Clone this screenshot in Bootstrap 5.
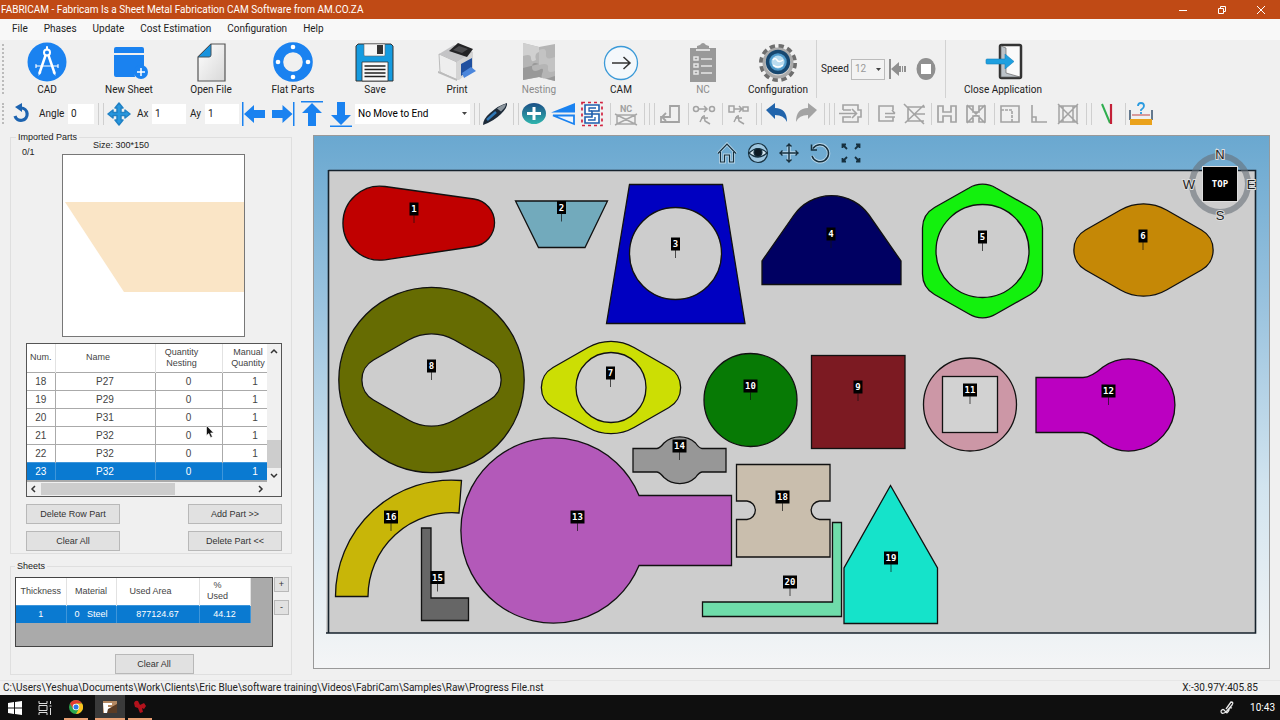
<!DOCTYPE html>
<html lang="en">
<head>
<meta charset="utf-8">
<meta name="viewport" content="width=device-width, initial-scale=1">
<title>FABRICAM</title>
<link href="https://cdn.jsdelivr.net/npm/bootstrap@5.3.0/dist/css/bootstrap.min.css" rel="stylesheet">
<script src="https://cdn.jsdelivr.net/npm/bootstrap@5.3.0/dist/js/bootstrap.bundle.min.js"></script>
<style>
  :root { --ui: Roboto, "Open Sans", sans-serif; --form: "Liberation Sans", Arial, sans-serif; --blue: #1a82f0; --sel: #0a7ad1; }
  body { background: #f0f0f0; color: #222; font-family: var(--ui); font-size: 10px; line-height: 14px; }
  svg { display: block; flex: none; }
  button { color: inherit; }
  .titlebar { background: #c04a15; color: #fff; height: 19px; padding-left: 1px; }
  .titlebar button, .plain { background: none; border: 0; padding: 0; }
  .titlebar button { width: 39px; height: 19px; }
  .menubar { height: 21px; padding: 0 0 1px 12px; background: #f8f8f8; }
  .menubar a { color: #222; text-decoration: none; margin-right: 16px; }
  .tools { height: 58px; }
  .grip { width: 2px; margin: 4px 2px; border-left: 2px dotted #bbb; }
  .tool { width: 82px; padding: 2px 0 0; border: 0; background: none; display: flex; flex-direction: column; align-items: center; gap: 1px; white-space: nowrap; }
  .tool.slim { width: 68px; }
  .tool:disabled { color: #8b8b8b; }
  .vline { width: 1px; background: #d2d2d2; }
  .speed-lab { width: 30px; }
  .speed { width: 34px; height: 21px; border: 1px solid #bbb; background-color: #f3f3f3; color: #999; padding: 0 3px; }
  .strip { height: 30px; padding-top: 1px; }
  .ib { width: 29px; height: 28px; display: flex; align-items: center; justify-content: center; border: 0; padding: 0; background: none; flex: none; }
  .sp { width: 5px; height: 22px; border-right: 1px solid #cfcfcf; margin: 0; flex: none; }
  .strip input { border: 0; height: 20px; padding: 0 3px; background: #fff; color: #222; }
  .strip label { padding-left: 4px; }
  .in-s { width: 26px; } .in-m { width: 34px; } .lab-s { width: 19px; } .lab-m { width: 33px; }
  .pick { width: 115px; height: 20px; border: 0; padding: 0 3px; background-color: #fff; }
  .arrowed { appearance: none; background-repeat: no-repeat; background-position: right 3px center; background-size: 5px 3px; background-image: url("data:image/svg+xml,%3Csvg xmlns='http://www.w3.org/2000/svg' viewBox='0 0 5 3'%3E%3Cpath d='M0 0h5L2.5 3z' fill='%23444'/%3E%3C/svg%3E"); }
  .side { width: 313px; flex: none; font-family: var(--form); font-size: 9px; line-height: 12px; padding: 3px 21px 0 10px; }
  .group { border: 1px solid #dfdfdf; }
  .group legend { float: none; width: auto; font-size: 9px; line-height: 12px; margin: 0 0 0 5px; padding: 0 2px; }
  .parts { padding: 0 9px 2px 15px; }
  .parts legend { margin-left: -10px; }
  .count { width: 36px; padding-top: 3px; margin-left: -4px; }
  .preview { margin-top: -4px; }
  .size { padding: 0 0 3px 31px; }
  .gridbox { border: 1px solid #555; position: relative; background: #fff; margin-top: 6px; }
  .clip { width: 241px; overflow: hidden; border-bottom: 2px solid #aaa; }
  .dg { border-collapse: collapse; table-layout: fixed; text-align: center; color: #444; margin: 0; }
  .dg th { font-weight: 400; line-height: 11px; padding: 0; background: #fff; border-right: 1px solid #e2e2e2; vertical-align: middle; }
  .dg td { padding: 0; height: 18px; line-height: 17px; font-size: 10px; border-top: 1px solid #aaa; border-right: 1px solid #aaa; background: #fff; }
  .dg .lefty { padding-right: 14px; }
  .dg .picked td { background: var(--sel); color: #fff; border-color: #3f96da; }
  .parts-t { width: 261px; } .parts-t thead tr { height: 28px; }
  .sheets-t { width: 234px; } .sheets-t thead tr { height: 27px; } .sheets-t td { font-size: 9px; }
  .bar { background: #f0f0f0; }
  .thumb { background: #cdcdcd; }
  .fb { height: 20px; border: 1px solid #b8b8b8; background: #e1e1e1; padding: 0; color: #333; line-height: 17px; border-radius: 0; }
  .w93 { width: 94px; } .w78 { width: 79px; }
  .pair { margin-top: 7px; }
  .mini { width: 15px; height: 15px; line-height: 11px; }
  .sheetbox { width: 258px; height: 70px; background: #aaa; border: 1px solid #444; }
  .sheets { padding: 0 2px 0 4px; margin-top: 6px; }
  .sheetrow { padding-top: 5px; }
  .canvas { margin: 7px 10px 11px 0; border: 1px solid #999; background: linear-gradient(#6aa8d0, #9cc4df 33%, #d2e4ef 66%, #f4f5f6); position: relative; min-width: 0; }
  .canvas > svg { width: 100%; height: auto; }
  .views { top: 3px; left: 0; right: 5px; position: absolute; }
  .views button { width: 31px; height: 28px; display: flex; justify-content: center; align-items: center; }
  .canvas > .compass { position: absolute; right: 10px; top: 8px; width: 78px; }
  .pt { stroke: #111; stroke-width: 1.3; }
  .lbl text { font: bold 9px "DejaVu Sans Mono", monospace; fill: #fff; text-anchor: middle; }
  .status { height: 15px; padding: 0 22px 0 3px; border-top: 1px solid #e6e6e6; }
  .taskbar { height: 25px; background: #0f0f0f; color: #fff; padding-right: 5px; }
  .tb { width: 30px; height: 25px; display: flex; align-items: center; justify-content: center; background: none; border: 0; padding: 0; }
  .tb.run { border-bottom: 2px solid #e9a074; width: 24px; margin: 0 3px; }
  .tb.on { background: #3a3a3a; width: 30px; margin: 0; }
</style>
</head>
<body class="d-flex flex-column min-vh-100 m-0">

<header class="titlebar d-flex align-items-center">
  <span class="me-auto text-nowrap">FABRICAM - Fabricam Is a Sheet Metal Fabrication CAM Software from AM.CO.ZA</span>
  <button aria-label="Minimize"><svg class="mx-auto" width="10" height="10" viewBox="0 0 10 10"><path d="M1 5.500h8" stroke="#fff"/></svg></button>
  <button aria-label="Restore"><svg class="mx-auto" width="10" height="10" viewBox="0 0 10 10" fill="none" stroke="#fff"><path d="M1.500 3.500h5v5h-5zM3.500 3V1.500h5v5H7"/></svg></button>
  <button aria-label="Close"><svg class="mx-auto" width="10" height="10" viewBox="0 0 10 10"><path d="M1 1l8 8M9 1l-8 8" stroke="#fff"/></svg></button>
</header>

<nav class="menubar d-flex align-items-center text-nowrap">
  <a href="#">File</a><a href="#">Phases</a><a href="#">Update</a><a href="#">Cost Estimation</a><a href="#">Configuration</a><a href="#">Help</a>
</nav>

<div class="tools d-flex" role="toolbar" aria-label="Main tools">
  <div class="grip"></div>
  <button class="tool"><svg width="40" height="40" viewBox="0 0 40 40"><circle cx="20" cy="20" r="19.500" fill="#1a82f0"/><g fill="none" stroke="#fff" stroke-linecap="round"><circle cx="20" cy="10.500" r="3" stroke-width="2"/><path d="M20 5v2.500" stroke-width="2"/><path d="M18.500 13.500L12.500 31M21.500 13.500L27.500 31" stroke-width="2.500"/><path d="M9 24h22M9 22.500v3M31 22.500v3" stroke-width="1.200"/></g><path d="M11.500 34l.5-5 2.500 1zM28.500 34l-.5-5-2.500 1z" fill="#fff"/></svg>CAD</button>
  <button class="tool"><svg width="40" height="40" viewBox="0 0 40 40"><path d="M5 7q0-2 2-2h26q2 0 2 2v4H5zM5 13h30v11a9 9 0 0 0-9 11H7q-2 0-2-2z" fill="#1a82f0"/><circle cx="32" cy="30" r="7" fill="#1a82f0"/><path d="M32 26v8M28 30h8" stroke="#fff" stroke-width="1.500"/></svg>New Sheet</button>
  <button class="tool"><svg width="40" height="40" viewBox="0 0 40 40"><defs><linearGradient id="pg" x1="0" y1="0" x2="1" y2="1"><stop offset="0" stop-color="#fff"/><stop offset="1" stop-color="#d8d8d8"/></linearGradient></defs><path d="M20 2h14v37H7V15z" fill="url(#pg)" stroke="#555" stroke-width="1.200"/><path d="M20 2L7 15h11q2 0 2-2z" fill="#1793de" stroke="#45525c"/></svg>Open File</button>
  <button class="tool"><svg width="40" height="40" viewBox="0 0 40 40"><circle cx="20" cy="20" r="14.800" fill="none" stroke="#1a82f0" stroke-width="10"/><g fill="#fff"><circle cx="20" cy="5" r="2.300"/><circle cx="20" cy="35" r="2.300"/><circle cx="5" cy="20" r="2.300"/><circle cx="35" cy="20" r="2.300"/></g></svg>Flat Parts</button>
  <button class="tool"><svg width="40" height="40" viewBox="0 0 40 40"><path d="M3 2h33l2 2v35H1V4z" fill="#159be0" stroke="#333"/><path d="M9 2h21v11q0 1-1 1H10q-1 0-1-1z" fill="#f7f7f7" stroke="#666" stroke-width=".6"/><path d="M22 3h6v9h-6z" fill="#333"/><path d="M7 20h26v19H7z" fill="#fafafa" stroke="#333" stroke-width=".8"/><path d="M9.500 24h21M9.500 27.500h21M9.500 31h21M9.500 34.500h21" stroke="#222" stroke-width="1.500"/></svg>Save</button>
  <button class="tool"><svg width="40" height="40" viewBox="0 0 40 40"><path d="M2 12L20 20v18L3 30z" fill="#eee" stroke="#999" stroke-width=".6"/><path d="M1 29l19 8v2L1 31z" fill="#bbb"/><path d="M20 20l16-10v17L22 38h-2z" fill="#d4d4d4"/><path d="M2 12L17 3l19 7-16 10z" fill="#c4c4c6"/><path d="M12 9l9-8 15 6-6 8z" fill="#232325"/><path d="M16 8l6-4 9 3-6 4z" fill="#4b4b4e"/><path d="M24 22l11-6v10l-11 8z" fill="#1f4f9f"/><path d="M25 31l9-6 5 4-12 7z" fill="#4b86dc"/></svg>Print</button>
  <button class="tool" disabled><svg width="40" height="40" viewBox="0 0 40 40"><path d="M4 1l16 4 16-3v37l-16-4-16 3z" fill="#b5b5b5"/><path d="M4 14q8-3 8 2t5 2q-2-7 3-8V5L4 1z" fill="#d0d0d0"/><path d="M20 22q-7-3-7 3t7 3q6-4 3 4t13 2v5l-16-4-16 3V26z" fill="#999"/><path d="M20 8q8-3 7 4t9 3v14q-8 3-7-3t-9-3z" fill="#c3c3c3"/></svg>Nesting</button>
  <button class="tool"><svg width="40" height="40" viewBox="0 0 40 40" fill="none"><circle cx="20" cy="21" r="16.500" fill="#f4f8fb" stroke="#3b9ad8" stroke-width="1.300"/><path d="M11 21h18M22.500 15L29 21l-6.500 6" stroke="#333" stroke-width="1.500"/></svg>CAM</button>
  <button class="tool" disabled><svg width="40" height="40" viewBox="0 0 40 40"><path d="M7 6h7V4l3-1q3-4 6 0l3 1v2h7v34H7z" fill="#999"/><path d="M13 8h14" stroke="#ddd" stroke-width="2"/><g fill="none" stroke="#e6e6e6" stroke-width="1.500"><path d="M11 15h4v3h-4zM11 22h4v3h-4zM11 29h4v3h-4zM18 17h11M18 24h11M18 31h11"/></g></svg>NC</button>
  <button class="tool slim"><svg width="40" height="40" viewBox="0 0 40 40"><circle cx="20" cy="21" r="16" fill="none" stroke="#6e6e6e" stroke-width="6" stroke-dasharray="5 3.380"/><circle cx="20" cy="21" r="14" fill="#d5d5d5" stroke="#aaa" stroke-width="3"/><circle cx="20" cy="20" r="10.500" fill="#4f9bcc" stroke="#17476f" stroke-width="3.500"/><circle cx="20" cy="20" r="6.500" fill="#b9dcf0"/><path d="M15 18q2-3 4 0t6 0M15 23q5 4 10 0" fill="none" stroke="#fff" stroke-width="1.500"/></svg>Configuration</button>
  <div class="vline ms-1 me-1"></div>
  <div class="d-flex align-items-center">
    <label for="speed" class="speed-lab">Speed</label>
    <select id="speed" class="speed arrowed rounded-0" disabled><option>12</option></select>
    <button class="plain ms-1" disabled aria-label="Step back"><svg width="18" height="22" viewBox="0 0 18 22" fill="#8f8f8f"><path d="M0 1h2v20H0zM2 11l8-7v4h2v6h-2v4zM13 8h1v6h-1zM15 8h2v6h-2z"/></svg></button>
    <button class="plain ms-2" disabled aria-label="Stop"><svg width="22" height="22" viewBox="0 0 22 22"><ellipse cx="11" cy="11" rx="9.500" ry="11" fill="#909090"/><rect x="6" y="6" width="10" height="10" fill="#fff"/></svg></button>
  </div>
  <div class="vline ms-2 me-3"></div>
  <button class="tool"><svg width="40" height="40" viewBox="0 0 40 40"><rect x="17" y="3" width="21" height="33" rx="1.500" fill="#fafafa" stroke="#333" stroke-width="2.500"/><path d="M18 4l5 2v25l14 4H18z" fill="#bcc3c9" stroke="#666" stroke-width=".7"/><path d="M3 18q0-1 1-1h18v-5l9 7.500-9 7.500v-5H4q-1 0-1-1z" fill="#1ea0e0" stroke="#1680bb" stroke-width=".6"/></svg>Close Application</button>
</div>

<div class="strip d-flex align-items-center" role="toolbar" aria-label="Edit tools">
  <div class="grip align-self-stretch"></div>
  <button class="ib" aria-label="Rotate"><svg width="24" height="24" viewBox="0 0 24 24"><path d="M6 14a6.200 6.200 0 1 0 6-8" fill="none" stroke="#1c63b0" stroke-width="3.200"/><path d="M13 1v9L6 5z" fill="#1c63b0"/></svg></button>
  <label for="angle" class="lab-m">Angle</label><input id="angle" class="in-s" value="0">
  <i class="sp"></i><i class="sp"></i>
  <button class="ib" aria-label="Move"><svg width="24" height="24" viewBox="0 0 24 24"><path d="M12 1l4 5h-2v4.500H18V8l5 4-5 4v-2.500h-4V18h2l-4 5-4-5h2v-4.500H6V16l-5-4 5-4v2.500h4V6H8z" fill="#2797de" stroke="#2081c4" stroke-width="1.500" stroke-linejoin="round"/></svg></button>
  <label for="ax" class="lab-s">Ax</label><input id="ax" class="in-m" value="1">
  <label for="ay" class="lab-s">Ay</label><input id="ay" class="in-m" value="1">
  <button class="ib" aria-label="Align left"><svg width="24" height="26" viewBox="0 0 24 26" fill="#1a82f0"><path d="M0 1h1.500v24H0zM2 13L12 4v5h11v8H12v5z"/></svg></button>
  <button class="ib" aria-label="Align right"><svg width="24" height="26" viewBox="0 0 24 26" fill="#1a82f0"><path d="M22 1h1.500v24H22zM21.500 13l-10-9v5H1v8h10.500v5z"/></svg></button>
  <button class="ib" aria-label="Align top"><svg width="24" height="26" viewBox="0 0 24 26" fill="#1a82f0"><path d="M1 0h22v1.500H1zM12 2l10 10h-6v13H8V12H2z"/></svg></button>
  <button class="ib" aria-label="Align bottom"><svg width="24" height="26" viewBox="0 0 24 26" fill="#1a82f0"><path d="M1 24.500h22V26H1zM12 24l10-10h-6V1H8v13H2z"/></svg></button>
  <select class="pick arrowed" aria-label="Move mode"><option>No Move to End</option></select>
  <i class="sp"></i><i class="sp"></i>
  <button class="ib" aria-label="Pen"><svg width="26" height="24" viewBox="0 0 26 24"><path d="M1 23q0-6 7-12Q17 3 25 1q1 4-6 11T1 23z" fill="#1d2a38"/><path d="M15 6.500q5-4 9-4.500 0 3-5 7.500z" fill="#8b959d"/><path d="M5 18l9-8" stroke="#2f77b5" stroke-width="2.500"/></svg></button>
  <i class="sp"></i><i class="sp"></i>
  <button class="ib" aria-label="Add"><svg width="24" height="24" viewBox="0 0 24 24"><defs><linearGradient id="ad" x1="0" y1="0" x2="0" y2="1"><stop offset="0" stop-color="#1c4f86"/><stop offset="1" stop-color="#2fb5ae"/></linearGradient></defs><ellipse cx="12" cy="11.500" rx="12" ry="10.500" fill="url(#ad)"/><path d="M12 5v13M5 11.500h14" stroke="#fff" stroke-width="3"/></svg></button>
  <button class="ib" aria-label="Flip"><svg width="26" height="24" viewBox="0 0 26 24"><path d="M1 10.500L25 1v9.500z" fill="#1a82f0"/><path d="M3 13.500h21V22z" fill="#eef5fc" stroke="#1a82f0" stroke-width="1.800"/></svg></button>
  <button class="ib" aria-label="Nest"><svg width="24" height="26" viewBox="0 0 24 26" fill="none"><rect x="2" y="1.500" width="20" height="23" stroke="#d22340" stroke-width="1.700" stroke-dasharray="3 3"/><path d="M5 4h14v6h-7v3h7v9H5v-6h7v-3H5z" fill="#fff" stroke="#1f5fae" stroke-width="1.600"/><path d="M16 7H9v3h3M8 19h7v-3" stroke="#1f5fae" stroke-width="1.300"/></svg></button>
  <i class="sp"></i>
  <button class="ib" disabled aria-label="NC"><svg width="26" height="26" viewBox="0 0 26 26" fill="none" stroke="#a8a8a8" stroke-width="1.500"><text x="13" y="11" text-anchor="middle" font-size="9" font-weight="bold" fill="#a0a0a0" stroke="none">NC</text><path d="M4 14h18v9H4zM2 13l22 11M24 13L2 24"/></svg></button>
  <i class="sp"></i><i class="sp"></i><i class="sp"></i>
  <button class="ib" disabled aria-label="Lead in"><svg width="24" height="24" viewBox="0 0 24 24" fill="none" stroke="#a3a3a3" stroke-width="1.800"><path d="M3 14v6h18V4h-9v11H4M8 11l-4 4 4 4"/></svg></button>
  <i class="sp"></i>
  <button class="ib" disabled aria-label="Link round"><svg width="24" height="24" viewBox="0 0 24 24" fill="none" stroke="#a3a3a3" stroke-width="1.500"><circle cx="4" cy="7" r="2.500"/><circle cx="20" cy="7" r="2.500"/><path d="M7 7h8M12 4l3 3-3 3M12 13l1 6 5 3M11 14l-3 6M9 16h7"/></svg></button>
  <i class="sp"></i>
  <button class="ib" disabled aria-label="Link square"><svg width="24" height="24" viewBox="0 0 24 24" fill="none" stroke="#a3a3a3" stroke-width="1.500"><path d="M3 4h5v6H3zM17 5h5v4h-5zM8 7h8M13 4l3 3-3 3M12 13l1 6 5 3M11 14l-3 6M9 16h7"/></svg></button>
  <i class="sp"></i><i class="sp"></i>
  <button class="ib" aria-label="Undo"><svg width="24" height="24" viewBox="0 0 24 24"><path d="M1 8l9-7v5q12 0 12 14-3-7-12-7v4z" fill="#2164ab"/></svg></button>
  <button class="ib" disabled aria-label="Redo"><svg width="24" height="24" viewBox="0 0 24 24"><path d="M23 8l-9-7v5Q2 6 2 20q3-7 12-7v4z" fill="#a3a3a3"/></svg></button>
  <i class="sp"></i><i class="sp"></i><i class="sp"></i>
  <button class="ib" disabled aria-label="Insert"><svg width="24" height="24" viewBox="0 0 24 24" fill="none" stroke="#a3a3a3" stroke-width="1.600"><path d="M5 8V3h15v5h3v7h-3v5H5v-5h8M5 8h8M1 11.500h17M14 7l4.500 4.500L14 16"/></svg></button>
  <i class="sp"></i>
  <button class="ib" disabled aria-label="Open contour"><svg width="24" height="24" viewBox="0 0 24 24" fill="none" stroke="#a3a3a3" stroke-width="1.600"><path d="M21 8V4H7v15h14v-4M13 11.500h10M13 15h10M20 8l3 3.500"/></svg></button>
  <button class="ib" disabled aria-label="Remove contour"><svg width="24" height="24" viewBox="0 0 24 24" fill="none" stroke="#a3a3a3" stroke-width="1.600"><path d="M24 5H7v14h16M14 12h10M3 2l20 20M23 3L4 21"/></svg></button>
  <i class="sp"></i>
  <button class="ib" disabled aria-label="Bridge"><svg width="24" height="24" viewBox="0 0 24 24" fill="none" stroke="#a3a3a3" stroke-width="1.700"><path d="M3 4h5v6h8V4h5v16h-5v-6H8v6H3z"/></svg></button>
  <button class="ib" disabled aria-label="Remove bridge"><svg width="24" height="24" viewBox="0 0 24 24" fill="none" stroke="#a3a3a3" stroke-width="1.700"><path d="M3 4h6v6h6V4h6v16h-6v-6H9v6H3zM3 3l18 18M21 3L3 21"/></svg></button>
  <i class="sp"></i>
  <button class="ib" disabled aria-label="Corner"><svg width="24" height="24" viewBox="0 0 24 24" fill="none" stroke="#a3a3a3" stroke-width="1.600"><path d="M3 4h18v16H3z"/><path d="M3 8h11v12" stroke-dasharray="3 1"/></svg></button>
  <button class="ib" disabled aria-label="Right angle"><svg width="24" height="24" viewBox="0 0 24 24" fill="none" stroke="#a3a3a3" stroke-width="1.600"><path d="M5 3v17h15M5 15h4v5"/></svg></button>
  <button class="ib" disabled aria-label="Delete frame"><svg width="24" height="24" viewBox="0 0 24 24" fill="none" stroke="#a3a3a3" stroke-width="1.500"><path d="M3 4h18v16H3zM7 4v16M17 4v16M2 2l20 20M22 2L2 22"/></svg></button>
  <i class="sp"></i><i class="sp"></i>
  <button class="ib" aria-label="Compare"><svg width="24" height="24" viewBox="0 0 24 24" fill="none"><path d="M7 2l8 19" stroke="#2fae4f" stroke-width="2"/><path d="M16 2v20" stroke="#c32038" stroke-width="2.200"/></svg></button>
  <i class="sp"></i>
  <button class="ib" aria-label="Measure"><svg width="24" height="26" viewBox="0 0 24 26" fill="none"><path d="M1 9v10M23 9v10" stroke="#34506e" stroke-width="1.500"/><path d="M3 14h18" stroke="#c14444"/><path d="M9 5q0-3 3-3t3 3q0 2-3 4v1M12 11v2" stroke="#2a9be0" stroke-width="1.800"/><path d="M1 18h22v6H1z" fill="#eaa21c"/></svg></button>
</div>

<main class="d-flex flex-grow-1">
  <aside class="side">
    <fieldset class="group parts">
      <legend>Imported Parts</legend>
      <div class="d-flex">
        <div class="count">0/1</div>
        <div class="preview ms-1">
          <div class="size">Size: 300*150</div>
          <svg width="183" height="183" viewBox="0 0 183 183"><rect x=".5" y=".5" width="182" height="182" fill="#fff" stroke="#777"/><path d="M3 48h179v90H62z" fill="#fae5c6"/></svg>
        </div>
      </div>
      <div class="gridbox">
        <div class="d-flex">
          <div class="clip">
            <table class="dg parts-t">
              <colgroup><col width="28"><col width="100"><col width="67"><col width="66"></colgroup>
              <thead><tr><th>Num.</th><th class="lefty">Name</th><th class="lefty">Quantity<br>Nesting</th><th class="lefty">Manual<br>Quantity</th></tr></thead>
              <tbody>
                <tr><td>18</td><td>P27</td><td>0</td><td>1</td></tr>
                <tr><td>19</td><td>P29</td><td>0</td><td>1</td></tr>
                <tr><td>20</td><td>P31</td><td>0</td><td>1</td></tr>
                <tr><td>21</td><td>P32</td><td>0</td><td>1</td></tr>
                <tr><td>22</td><td>P32</td><td>0</td><td>1</td></tr>
                <tr class="picked"><td>23</td><td>P32</td><td>0</td><td>1</td></tr>
              </tbody>
            </table>
          </div>
          <div class="bar flex-grow-1 d-flex flex-column align-items-center justify-content-between">
            <svg width="14" height="14" viewBox="0 0 14 14"><path d="M4 9l3-3 3 3" fill="none" stroke="#333" stroke-width="1.500"/></svg>
            <div class="thumb w-100 mt-auto" style="height:28px"></div>
            <svg width="14" height="14" viewBox="0 0 14 14"><path d="M4 6l3 3 3-3" fill="none" stroke="#333" stroke-width="1.500"/></svg>
          </div>
        </div>
        <div class="bar d-flex align-items-center">
          <svg width="14" height="14" viewBox="0 0 14 14"><path d="M8 4L5 7l3 3" fill="none" stroke="#333" stroke-width="1.500"/></svg>
          <div class="thumb" style="width:134px;height:12px"></div>
          <svg class="ms-auto me-3" width="10" height="14" viewBox="0 0 10 14"><path d="M4 4l3 3-3 3" fill="none" stroke="#333" stroke-width="1.500"/></svg>
        </div>
        <svg class="position-absolute" style="left:179px;top:81px" width="9" height="13" viewBox="0 0 9 13"><path d="M.5.5v10l2.300-2 1.800 4 1.800-.8-1.800-3.800h3z" fill="#111" stroke="#fff" stroke-width=".6"/></svg>
      </div>
      <div class="pair d-flex justify-content-between"><button class="fb w93">Delete Row Part</button><button class="fb w93">Add Part &gt;&gt;</button></div>
      <div class="pair d-flex justify-content-between"><button class="fb w93">Clear All</button><button class="fb w93">Delete Part &lt;&lt;</button></div>
    </fieldset>
    <fieldset class="group sheets">
      <legend class="ms-0">Sheets</legend>
      <div class="sheetrow d-flex justify-content-between">
        <div class="sheetbox">
          <table class="dg sheets-t">
            <colgroup><col width="50"><col width="50"><col width="83"><col width="51"></colgroup>
            <thead><tr><th>Thickness</th><th>Material</th><th class="lefty">Used Area</th><th class="lefty">%<br>Used</th></tr></thead>
            <tbody><tr class="picked"><td>1</td><td>0 &nbsp; Steel</td><td>877124.67</td><td>44.12</td></tr></tbody>
          </table>
        </div>
        <div class="d-flex flex-column gap-2"><button class="fb mini" aria-label="Add sheet">+</button><button class="fb mini" aria-label="Remove sheet">-</button></div>
      </div>
      <div class="pair d-flex justify-content-center ps-1"><button class="fb w78">Clear All</button></div>
    </fieldset>
  </aside>

  <section class="canvas flex-grow-1" aria-label="Nesting view">
    <svg viewBox="314 136 955 532">
      <defs>
        <path id="dia" d="M-23-40A46 46 0 0 1 23-40L58-20A23 23 0 0 1 58 20L23 40A46 46 0 0 1-23 40L-58 20A23 23 0 0 1-58-20Z"/>
        <g id="b1"><rect x="-4.500" y="-6.500" width="9" height="13" fill="#000"/><path d="M0 6v8" stroke="#111" stroke-opacity=".7"/></g>
        <g id="b2"><rect x="-7" y="-6.500" width="14" height="13" fill="#000"/><path d="M0 6v8" stroke="#111" stroke-opacity=".7"/></g>
      </defs>
      <path d="M328.500 170.500H1255.500V633H326" fill="#cdcdcd" stroke="#16222c" stroke-width="1.600"/><path d="M328.500 170v463" stroke="#16222c" stroke-width="1.600"/>
      <g class="pt">
        <path d="M385 186.500L474 199A24 24 0 0 1 474 246.500L385 259.800A37 37 0 1 1 385 186.500Z" fill="#c00000"/>
        <path d="M515.500 201H607.500L585 247.500H538.500Z" fill="#72aabc"/>
        <path d="M629.500 184.500H722.500L745 323.500H606.500Z" fill="#0000c1"/><circle cx="675.500" cy="253.500" r="46" fill="#cdcdcd"/>
        <path d="M762 284.500V261L794 215A46 46 0 0 1 869 215L901 261V284.500Z" fill="#000062"/>
        <path d="M922.500 228A24 24 0 0 1 934.500 207.500L969 188A26 26 0 0 1 996 188L1030.500 207.500A24 24 0 0 1 1042.500 228V274A24 24 0 0 1 1030.500 294.500L996 314A26 26 0 0 1 969 314L934.500 294.500A24 24 0 0 1 922.500 274Z" fill="#13f10d"/><circle cx="982.500" cy="251" r="46.500" fill="#cdcdcd"/>
        <use href="#dia" x="1143.500" y="250" fill="#c58806"/>
        <circle cx="431.500" cy="380" r="92.700" fill="#666c02"/><use href="#dia" x="431.500" y="380" fill="#cdcdcd"/>
        <use href="#dia" x="611" y="387.500" fill="#ccde04"/><circle cx="611" cy="387.500" r="35" fill="#cdcdcd"/>
        <circle cx="750.500" cy="400" r="46.500" fill="#077a05"/>
        <rect x="811.500" y="355.500" width="93.500" height="93" fill="#7c1a22"/>
        <circle cx="970" cy="404.500" r="46.500" fill="#cc97a6"/><rect x="942.500" y="376.500" width="55" height="56" fill="#d2d2d2"/>
        <path d="M1036 377.500H1083Q1091 377.500 1103 367A46 46 0 1 1 1103 443Q1091 432.500 1083 432.500H1036Z" fill="#bb00c1"/>
        <path d="M639 495.500H731.500V565.500H639A92.500 92.500 0 1 1 639 495.500Z" fill="#b359b9"/>
        <path d="M633 448.500H657Q660 448 664 443A23.500 23.500 0 0 1 695.500 443Q699 448 702 448.500H726V472H702Q699 472.500 695.500 477.500A23.500 23.500 0 0 1 664 477.500Q660 472.500 657 472H633Z" fill="#979797"/>
        <path d="M421.500 528H431V598H468.500V620.500H421.500Z" fill="#666"/>
        <path d="M335.500 596.500A116 116 0 0 1 461.500 480.500L459 513A84 84 0 0 0 368 596.500Z" fill="#c8b608"/>
        <path d="M736.500 464.500H830V501H819.500A9.300 9.300 0 0 0 819.500 519.500H830V557H736.500V519.500H747A9.300 9.300 0 0 0 747 501H736.500Z" fill="#c9bead"/>
        <path d="M702.500 602H832.500V522.500H841.500V616.500H702.500Z" fill="#6fdcaa"/>
        <path d="M890.500 485.500L937.500 568V623.500H844V568Z" fill="#15e3ca"/>
      </g>
      <g class="lbl">
        <g transform="translate(414 209)"><use href="#b1"/><text y="3">1</text></g>
        <g transform="translate(561.500 207.500)"><use href="#b1"/><text y="3">2</text></g>
        <g transform="translate(675.500 244)"><use href="#b1"/><text y="3">3</text></g>
        <g transform="translate(831 234)"><use href="#b1"/><text y="3">4</text></g>
        <g transform="translate(982.500 237)"><use href="#b1"/><text y="3">5</text></g>
        <g transform="translate(1143 236)"><use href="#b1"/><text y="3">6</text></g>
        <g transform="translate(610.500 373)"><use href="#b1"/><text y="3">7</text></g>
        <g transform="translate(431.500 366)"><use href="#b1"/><text y="3">8</text></g>
        <g transform="translate(858 387)"><use href="#b1"/><text y="3">9</text></g>
        <g transform="translate(750.500 386)"><use href="#b2"/><text y="3">10</text></g>
        <g transform="translate(970 390)"><use href="#b2"/><text y="3">11</text></g>
        <g transform="translate(1108.500 391)"><use href="#b2"/><text y="3">12</text></g>
        <g transform="translate(577.500 517)"><use href="#b2"/><text y="3">13</text></g>
        <g transform="translate(679.500 446)"><use href="#b2"/><text y="3">14</text></g>
        <g transform="translate(437.500 577.500)"><use href="#b2"/><text y="3">15</text></g>
        <g transform="translate(391 517)"><use href="#b2"/><text y="3">16</text></g>
        <g transform="translate(782.500 497)"><use href="#b2"/><text y="3">18</text></g>
        <g transform="translate(891 558)"><use href="#b2"/><text y="3">19</text></g>
        <g transform="translate(790 582)"><use href="#b2"/><text y="3">20</text></g>
      </g>
    </svg>
    <div class="views d-flex justify-content-center">
      <button class="plain" aria-label="Home"><svg width="22" height="22" viewBox="0 0 22 22" fill="none"><path d="M2 11.500L11 2l9 9.500M4.500 10V20H8.500V13H13.500V20H17.500V10" stroke="#fff" stroke-opacity=".5" stroke-width="3"/><path d="M2 11.500L11 2l9 9.500M4.500 10V20H8.500V13H13.500V20H17.500V10" stroke="#16303f" stroke-width="1.200"/></svg></button>
      <button class="plain" aria-label="Look"><svg width="22" height="22" viewBox="0 0 22 22" fill="none" stroke="#16303f" stroke-width="1.200"><circle cx="11" cy="11" r="9.500" fill="#9ec6df"/><path d="M2 11q9-9 18 0-9 8-18 0z" fill="#d5e6f0"/><circle cx="11" cy="10.500" r="4" fill="#0d1a24"/></svg></button>
      <button class="plain" aria-label="Pan"><svg width="22" height="22" viewBox="0 0 22 22" fill="none"><path d="M11 2v18M2 11h18" stroke="#fff" stroke-opacity=".5" stroke-width="3.500"/><path d="M11 2v18M2 11h18M8.500 4.500L11 2l2.500 2.500M8.500 17.500L11 20l2.500-2.500M4.500 8.500L2 11l2.500 2.500M17.500 8.500L20 11l-2.500 2.500" stroke="#16303f" stroke-width="1.400"/></svg></button>
      <button class="plain" aria-label="Orbit"><svg width="22" height="22" viewBox="0 0 22 22" fill="none"><path d="M4 6.500A8.500 8.500 0 1 1 3 14" stroke="#fff" stroke-opacity=".5" stroke-width="3.500"/><path d="M4 6.500A8.500 8.500 0 1 1 3 14M2.500 2.500V8H8" stroke="#16303f" stroke-width="1.500"/></svg></button>
      <button class="plain" aria-label="Fit"><svg width="22" height="22" viewBox="0 0 22 22" fill="none"><path id="fit" d="M6 2.500H2.500V6M3 3l4 4M16 2.500h3.500V6M19 3l-4 4M6 19.500H2.500V16M3 19l4-4M16 19.500h3.500V16M19 19l-4-4" stroke="#16303f" stroke-width="1.800"/></svg></button>
    </div>
    <svg class="compass" width="78" height="80" viewBox="0 0 78 80" font-family="Liberation Sans, Arial, sans-serif" font-size="13" text-anchor="middle" fill="#222">
      <circle cx="39" cy="40" r="28" fill="none" stroke="#687078" stroke-opacity=".6" stroke-width="6"/>
      <rect x="21.500" y="22.500" width="35" height="35" fill="#000" stroke="#ddd"/>
      <g stroke="#ddd" stroke-width="2" paint-order="stroke"><text x="39" y="15">N</text><text x="39" y="76">S</text><text x="8" y="45">W</text><text x="70" y="45">E</text></g>
      <text x="39" y="43" font-family="DejaVu Sans Mono, monospace" font-size="9" font-weight="bold" fill="#fff">TOP</text>
    </svg>
  </section>
</main>

<footer class="status d-flex align-items-center justify-content-between text-nowrap">
  <span>C:\Users\Yeshua\Documents\Work\Clients\Eric Blue\software training\Videos\FabriCam\Samples\Raw\Progress File.nst</span><span>X:-30.97Y:405.85</span>
</footer>

<div class="taskbar d-flex align-items-center">
  <button class="tb" aria-label="Start"><svg width="14" height="14" viewBox="0 0 14 14" fill="#fff"><path d="M0 2l6-1v5.600H0zM7 .900L14 0v6.600H7zM0 7.400h6V13l-6-1zM7 7.400h7V14l-7-1z"/></svg></button>
  <button class="tb" aria-label="Task view"><svg width="14" height="14" viewBox="0 0 14 14" fill="none" stroke="#ddd"><path d="M1 0v2.500h8V0M1 4.500h8v5H1zM1 14v-2.500h8V14M12.500 0v3M12.500 7v7M11.500 5h2"/></svg></button>
  <button class="tb run ms-1" aria-label="Chrome"><svg width="14" height="14" viewBox="0 0 14 14"><circle cx="7" cy="7" r="7" fill="#2da94f"/><path d="M1 3.500A7 7 0 0 1 13.100 3.500H7L4 8.700z" fill="#e53e30"/><path d="M13.100 3.500A7 7 0 0 1 7 14L10 8.500 7 3.500z" fill="#fcc31e"/><circle cx="7" cy="7" r="3.300" fill="#fff"/><circle cx="7" cy="7" r="2.500" fill="#2c7be5"/></svg></button>
  <button class="tb run on ms-1" aria-label="Fabricam"><svg width="14" height="14" viewBox="0 0 14 14"><path d="M0 1h14v12H0z" fill="#b58962"/><path d="M0 3h9v2H5v2h4v2H5v4H1z" fill="#fff"/><path d="M5 9l9-5v9H4z" fill="#5c3d25"/></svg></button>
  <button class="tb run" aria-label="Recorder"><svg width="14" height="14" viewBox="0 0 14 14"><path d="M1 3q1-3 4-2l2 4 4-2 2 3-2 3-2-1 1 4-3 1-2-5-3-1z" fill="#b3121c"/></svg></button>
  <svg class="ms-auto me-3" width="14" height="16" viewBox="0 0 14 16" fill="none" stroke="#e8e8e8" stroke-width="1.300"><path d="M6 9L11 2q3 0 1 3L6 12q-5 3-5-1 2-3 4 0 2 4 4-1 0-3 3-2"/></svg>
  <span>10:43</span>
</div>
</body>
</html>
